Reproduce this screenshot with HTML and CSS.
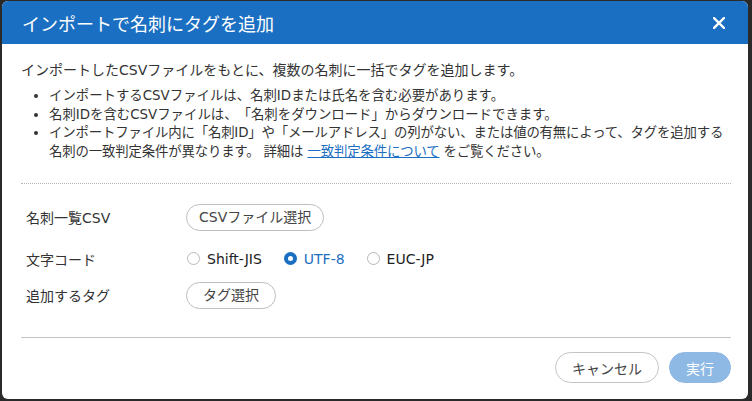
FILE: index.html
```html
<!DOCTYPE html>
<html lang="ja">
<head>
<meta charset="utf-8">
<title>インポートで名刺にタグを追加</title>
<link rel="stylesheet" href="styles.css">
</head>
<body>
<div class="dialog">
  <div class="header">
    <h1 class="title">インポートで名刺にタグを追加</h1>
    <span class="close" aria-label="閉じる">
      <svg width="12" height="12" viewBox="0 0 12 12"><path d="M1 1 L11 11 M11 1 L1 11" stroke="#fff" stroke-width="2.4" stroke-linecap="square"/></svg>
    </span>
  </div>
  <div class="content">
    <p class="intro">インポートしたCSVファイルをもとに、複数の名刺に一括でタグを追加します。</p>
    <ul class="notes">
      <li>インポートするCSVファイルは、名刺IDまたは氏名を含む必要があります。</li>
      <li>名刺IDを含むCSVファイルは、「名刺をダウンロード」からダウンロードできます。</li>
      <li class="note-long">インポートファイル内に「名刺ID」や「メールアドレス」の列がない、または値の有無によって、タグを追加する名刺の一致判定条件が異なります。 詳細は <a class="link" href="#">一致判定条件について</a> をご覧ください。</li>
    </ul>
    <div class="dotted"></div>
    <div class="form">
      <div class="row row-csv">
        <div class="label">名刺一覧CSV</div>
        <button class="btn-outline btn-csv">CSVファイル選択</button>
      </div>
      <div class="row row-code">
        <div class="label">文字コード</div>
        <div class="radios">
          <label class="radio"><span class="circle"></span>Shift-JIS</label>
          <label class="radio checked"><span class="circle"></span>UTF-8</label>
          <label class="radio"><span class="circle"></span>EUC-JP</label>
        </div>
      </div>
      <div class="row row-tag">
        <div class="label">追加するタグ</div>
        <button class="btn-outline btn-tag">タグ選択</button>
      </div>
    </div>
    <div class="solid"></div>
    <div class="footer">
      <button class="btn-cancel">キャンセル</button>
      <button class="btn-primary">実行</button>
    </div>
  </div>
</div>
</body>
</html>
```
FILE: styles.css
```css
html, body {
  margin: 0;
  padding: 0;
}
body {
  width: 752px;
  height: 401px;
  background: #2a2a2a;
  font-family: "DejaVu Sans", "Noto Sans CJK JP", sans-serif;
  color: #333;
  overflow: hidden;
  padding: 1px 4px 2px 2px;
  box-sizing: border-box;
  text-spacing-trim: space-all;
}
.dialog {
  width: 746px;
  height: 398px;
  background: #fff;
  border-radius: 6px;
  overflow: hidden;
  display: flex;
  flex-direction: column;
}
.header {
  height: 43px;
  background: #1b6fc2;
  display: flex;
  align-items: center;
  justify-content: space-between;
  padding: 0 23px 0 20px;
  flex: none;
}
.title {
  margin: 0;
  font-family: "Noto Sans CJK JP", sans-serif;
  font-weight: normal;
  font-size: 18px;
  color: #fff;
  line-height: 24px;
}
.close {
  display: flex;
  width: 12px;
  height: 12px;
  margin-top: 1px;
}
.content {
  padding: 17px 17px 0 19px;
  font-size: 14px;
}
.intro {
  margin: 0;
  line-height: 19px;
}
.notes {
  margin: 7px 0 0;
  padding-left: 28px;
  font-size: 13.4px;
  line-height: 18.7px;
}
.note-long {
  letter-spacing: -0.15px;
}
.link {
  color: #1b6fc2;
  text-decoration: underline;
}
.dotted {
  margin-top: 21px;
  border-top: 1px dotted #b5b5b5;
}
.form {
  padding-left: 5px;
}
.row {
  display: flex;
  align-items: center;
}
.label {
  width: 160px;
  flex: none;
}
.row-csv {
  margin-top: 20px;
  height: 27px;
}
.row-code {
  margin-top: 18px;
  height: 20px;
}
.row-tag {
  margin-top: 13px;
  height: 27px;
}
.btn-outline {
  font: inherit;
  font-size: 14px;
  color: #444;
  background: #fff;
  border: 1px solid #bdbdbd;
  border-radius: 14px;
  height: 27px;
  line-height: 25px;
}
.btn-csv {
  padding: 0 12px;
}
.btn-tag {
  padding: 0 16px;
}
.radios {
  display: flex;
  align-items: center;
  gap: 21px;
}
.radio {
  display: flex;
  align-items: center;
  gap: 7px;
  color: #222;
}
.circle {
  width: 13px;
  height: 13px;
  border-radius: 50%;
  border: 1px solid #b8b8b8;
  box-sizing: border-box;
  background: #fff;
  margin-left: 1px;
}
.radio.checked {
  color: #1b6fc2;
}
.radio.checked .circle {
  border: 4px solid #1b6fc2;
}
.solid {
  margin-top: 28px;
  border-top: 1px solid #c4c4c4;
}
.footer {
  display: flex;
  justify-content: flex-end;
  gap: 10px;
  margin-top: 14px;
}
.btn-cancel, .btn-primary {
  font-family: "Noto Sans CJK JP", sans-serif;
  font-size: 14px;
  height: 31px;
  border-radius: 16px;
  line-height: 29px;
}
.btn-cancel {
  background: #fff;
  color: #444;
  border: 1px solid #c4c4c4;
  width: 104px;
}
.btn-primary {
  background: #8db9e4;
  color: #fff;
  border: 1px solid #8db9e4;
  width: 62px;
}
```
